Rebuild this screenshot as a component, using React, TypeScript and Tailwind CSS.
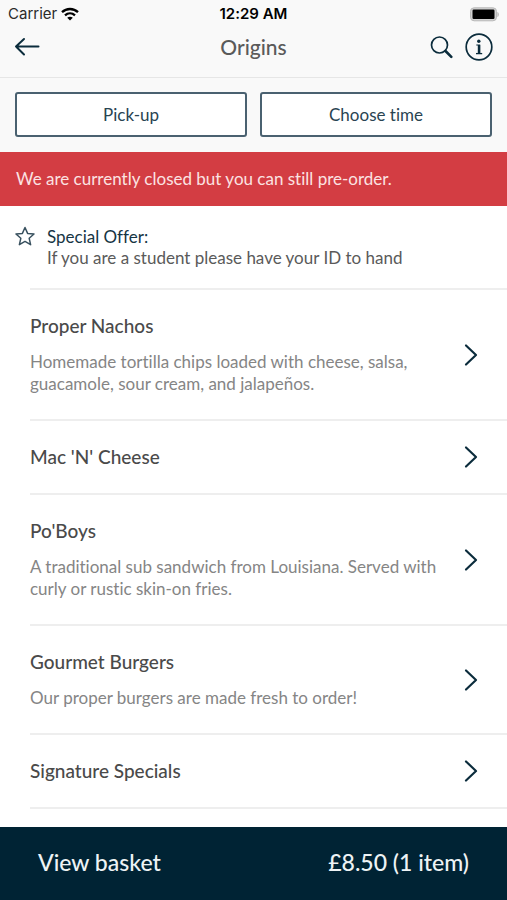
import { ReactNode } from 'react'

type Category = {
  name: string
  description?: string
}

const categories: Category[] = [
  {
    name: 'Proper Nachos',
    description:
      'Homemade tortilla chips loaded with cheese, salsa, guacamole, sour cream, and jalapeños.',
  },
  { name: "Mac 'N' Cheese" },
  {
    name: "Po'Boys",
    description:
      'A traditional sub sandwich from Louisiana. Served with curly or rustic skin-on fries.',
  },
  { name: 'Gourmet Burgers', description: 'Our proper burgers are made fresh to order!' },
  { name: 'Signature Specials' },
]

function StatusBar() {
  return (
    <div className="grid h-7 grid-cols-3 items-center px-2 font-['Inter',sans-serif] text-[15px] text-black">
      <div className="flex items-center gap-1 text-[#2b2b2b]">
        <span>Carrier</span>
        <svg width="18" height="14" viewBox="0 0 18 14" fill="none" stroke="#000" strokeWidth="2.3" aria-hidden="true">
          <path d="M1 5.2C5.5.9 12.5.9 17 5.2" />
          <path d="M4 8.3c2.900-2.700 7.100-2.700 10 0" />
          <path d="M9 13.600 6.200 10.800c1.600-1.400 4-1.400 5.600 0z" fill="#000" stroke="none" />
        </svg>
      </div>
      <span className="text-center font-semibold">12:29 AM</span>
      <svg className="justify-self-end" width="30" height="15" viewBox="0 0 30 15" aria-hidden="true">
        <rect x="1.500" y="0.800" width="26" height="13" rx="3.600" fill="#d2d2d2" stroke="#b8b8b8" />
        <rect x="3.500" y="2.600" width="22" height="9.400" rx="1.200" fill="#000" />
        <path d="M28.500 5c1.600.6 1.600 4.400 0 5z" fill="#a8a8a8" />
      </svg>
    </div>
  )
}

function Header() {
  return (
    <header className="border-b border-[#e6e6e6] bg-[#f9f9f9]">
      <StatusBar />
      <div className="grid h-[49px] grid-cols-3 items-start px-[14px] pt-[3px] text-[#0b2c3c]">
        <button type="button" aria-label="Back" className="flex h-8 w-8 items-center">
          <svg width="26" height="20" viewBox="0 0 26 20" fill="none" stroke="currentColor" strokeWidth="2" strokeLinecap="round" strokeLinejoin="round">
            <path d="M24.500 9.500H2M10 2 2 9.500 10 17.500" />
          </svg>
        </button>
        <h1 className="text-center text-[21px] leading-8 font-medium text-[#5a5a5a]">Origins</h1>
        <div className="flex justify-end gap-3">
          <button type="button" aria-label="Search" className="flex h-8 items-center">
            <svg width="24" height="24" viewBox="0 0 24 24" fill="none" stroke="currentColor" strokeLinecap="round">
              <circle cx="10.500" cy="10" r="8" strokeWidth="1.700" />
              <path d="m16.500 16 5.800 5.800" strokeWidth="2.600" />
            </svg>
          </button>
          <button type="button" aria-label="Restaurant information" className="flex h-8 items-center">
            <svg width="28" height="28" viewBox="0 0 28 28" fill="none" stroke="currentColor">
              <circle cx="14" cy="14" r="12.800" strokeWidth="1.700" />
              <circle cx="13.800" cy="8.200" r="1.700" fill="currentColor" stroke="none" />
              <path d="M11.300 12h3.300v8" strokeWidth="1.200" />
              <path d="M14 12v8.500" strokeWidth="2.400" />
              <path d="M11 20.600h6.200" strokeWidth="1.300" />
            </svg>
          </button>
        </div>
      </div>
    </header>
  )
}

function OptionButton({ children }: { children: ReactNode }) {
  return (
    <button
      type="button"
      className="h-[45px] flex-1 rounded-[3px] border-2 border-[#4a6170] bg-white text-[17px] text-[#294452]"
    >
      {children}
    </button>
  )
}

function Chevron() {
  return (
    <svg
      className="shrink-0"
      width="14"
      height="24"
      viewBox="0 0 14 24"
      fill="none"
      stroke="#0b2c3c"
      strokeWidth="2.200"
      strokeLinecap="round"
      strokeLinejoin="round"
      aria-hidden="true"
    >
      <path d="m2 2.500 10 9.500L2 21.500" />
    </svg>
  )
}

function CategoryRow({ name, description }: Category) {
  return (
    <li className="border-b-2 border-[#eee]">
      <a href="#" className="flex items-center justify-between gap-2 py-6 pr-[29px]">
        <div className="flex flex-col gap-[13px]">
          <h2 className="text-[19px] leading-6 font-medium text-[#4a4a4a]">{name}</h2>
          {description && <p className="text-[17px] leading-[22px] text-[#858585]">{description}</p>}
        </div>
        <Chevron />
      </a>
    </li>
  )
}

export default function App() {
  return (
    <div className="flex min-h-screen flex-col bg-white font-['Lato',sans-serif] [font-variant-ligatures:none]">
      <Header />

      <div className="flex gap-[13px] bg-[#f9f9f9] px-[15px] pt-[14px] pb-[15px]">
        <OptionButton>Pick-up</OptionButton>
        <OptionButton>Choose time</OptionButton>
      </div>

      <p className="bg-[#d33d43] px-4 py-[15px] text-[17px] leading-6 text-[#fbe3e2]">
        We are currently closed but you can still pre-order.
      </p>

      <main className="flex-1">
        {/* Special offer */}
        <div className="flex gap-3 px-[15px] py-5 text-[17px] leading-[21px]">
          <svg className="shrink-0" width="20" height="21" viewBox="0 0 20 21" fill="none" stroke="#39515f" strokeWidth="1.500" strokeLinejoin="round" aria-hidden="true">
            <path d="m10 1.500 2.600 5.900 6.400.6-4.800 4.300 1.400 6.400L10 15.400l-5.600 3.300 1.400-6.400L1 8l6.400-.6z" />
          </svg>
          <div>
            <h2 className="text-[#163544]">Special Offer:</h2>
            <p className="text-[#5a5a5a]">If you are a student please have your ID to hand</p>
          </div>
        </div>

        <ul className="ml-[30px] border-t-2 border-[#eee]">
          {categories.map((category) => (
            <CategoryRow key={category.name} {...category} />
          ))}
        </ul>
      </main>

      <button
        type="button"
        className="sticky bottom-0 flex h-[73px] w-full shrink-0 items-center justify-between bg-[#002334] px-[38px] pb-0.5 text-[23px] font-medium text-[#eef3f5]"
      >
        <span>View basket</span>
        <span>£8.50 (1 item)</span>
      </button>
    </div>
  )
}
